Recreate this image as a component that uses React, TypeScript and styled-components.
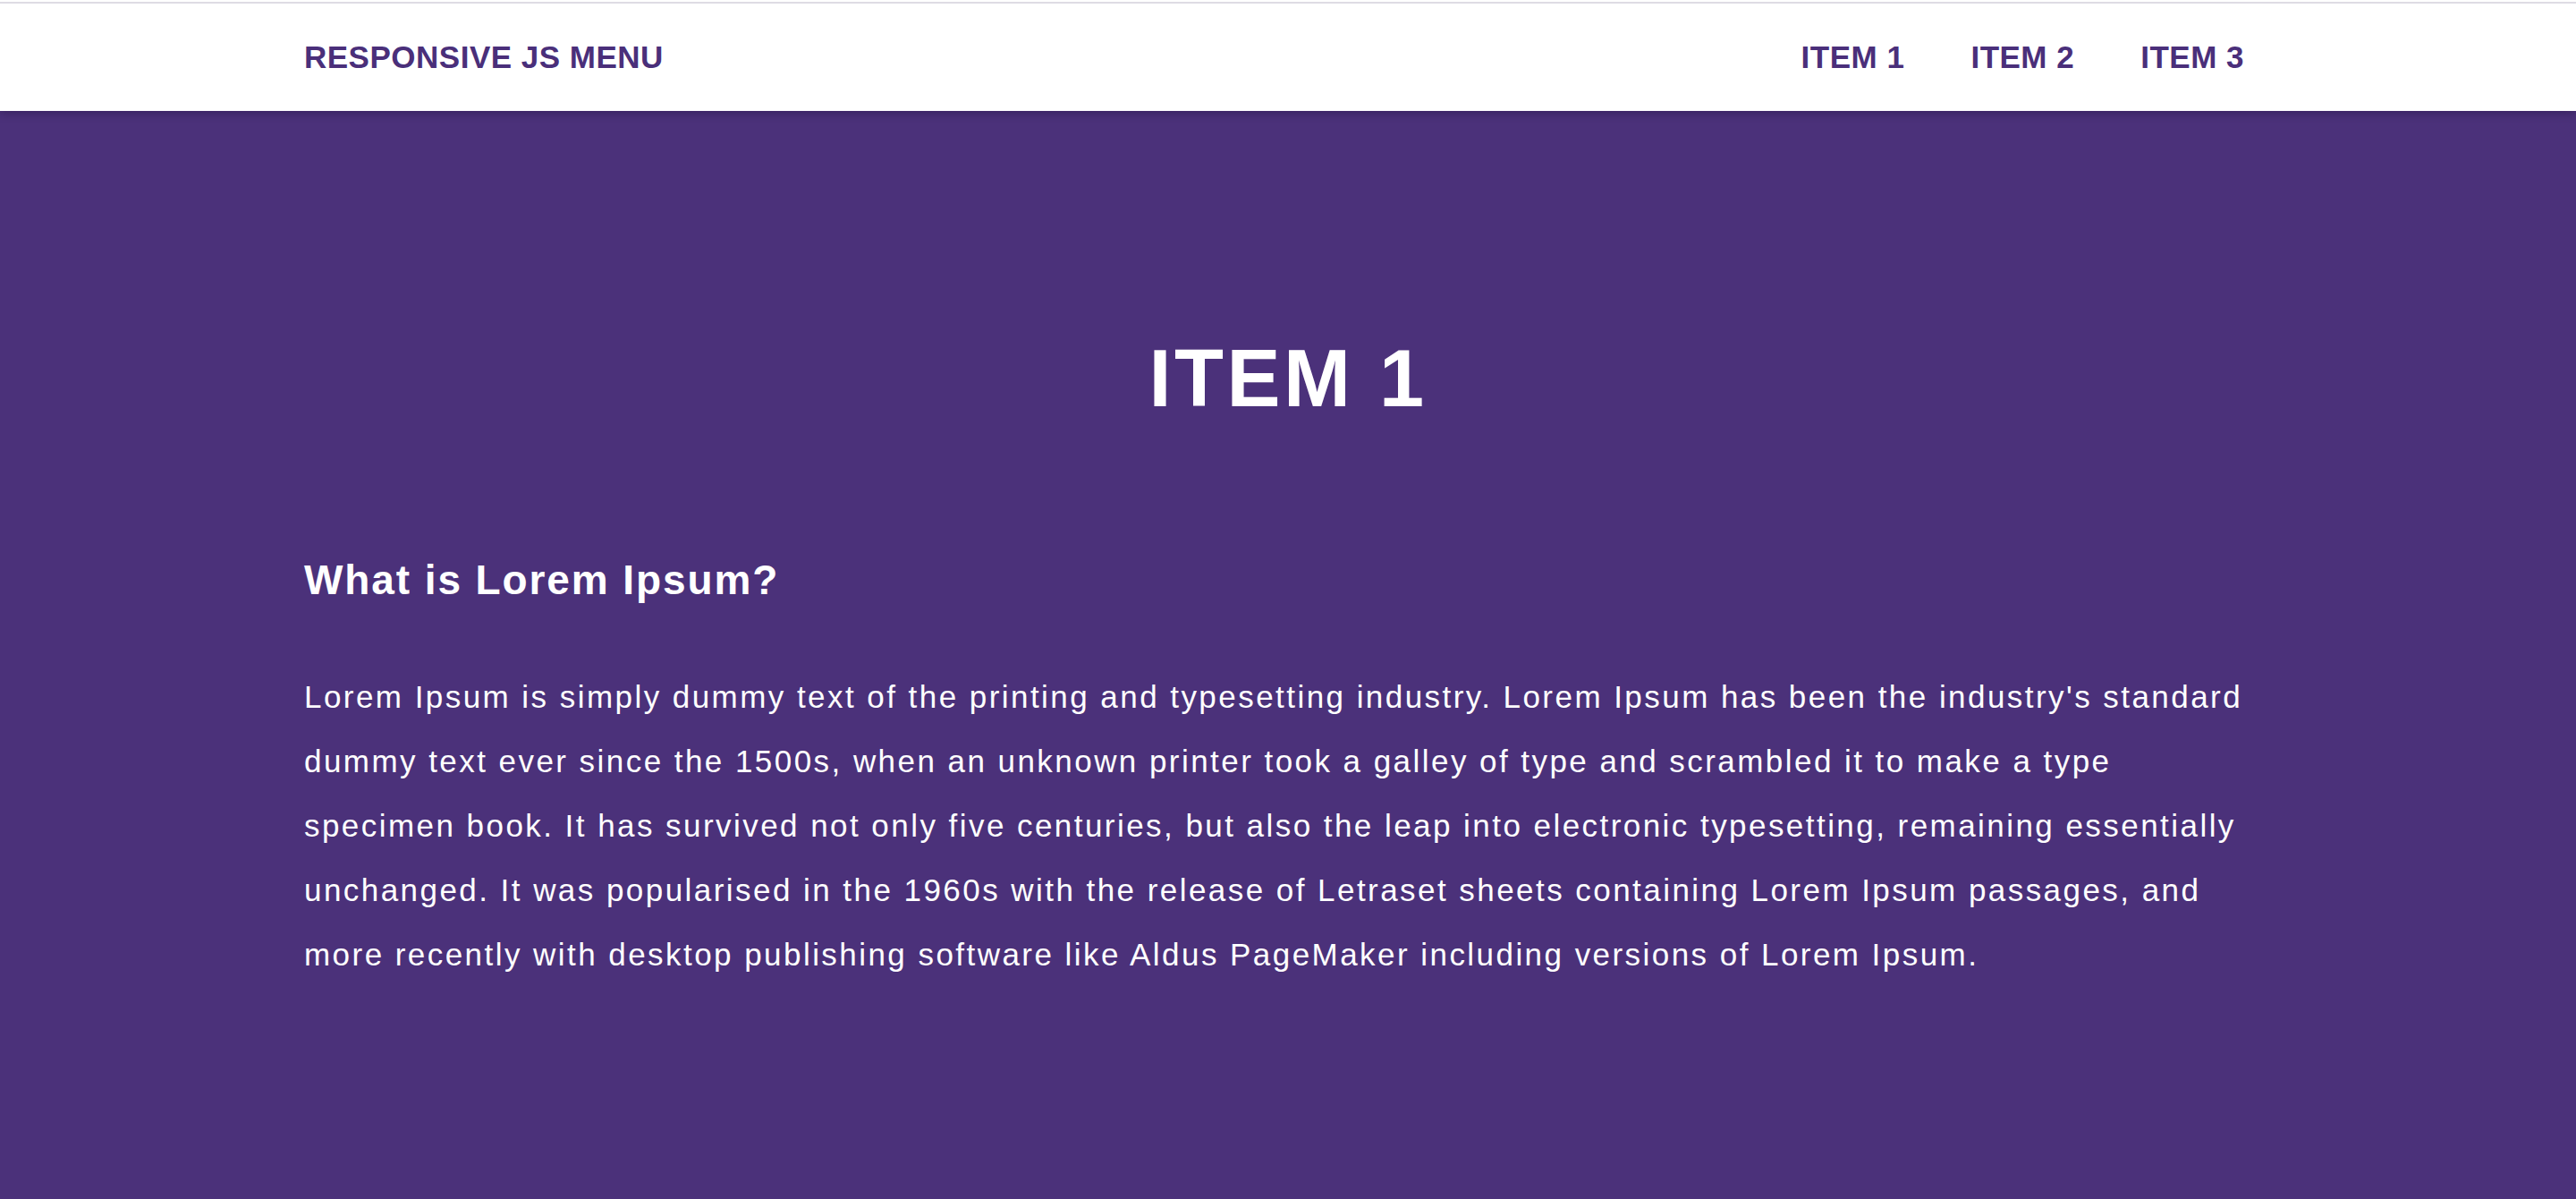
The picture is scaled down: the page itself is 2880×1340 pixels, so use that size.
import React from "react";
import styled, { createGlobalStyle } from "styled-components";

const GlobalStyle = createGlobalStyle`
  html, body {
    margin: 0;
    padding: 0;
    background: #4b317a;
  }
  body {
    font-family: "Liberation Sans", Arial, sans-serif;
    min-height: 1340px;
  }
  * { box-sizing: border-box; }
`;

const Page = styled.div`
  min-height: 1340px;
  background: #4b317a;
  display: flex;
  flex-direction: column;
`;

const Header = styled.header`
  background: #ffffff;
  height: 124px;
  padding-top: 2px;
  display: flex;
  flex-direction: column;
  box-shadow: 0 2px 10px rgba(20, 8, 40, 0.35);
  position: relative;
  z-index: 1;
`;

const TopLine = styled.div`
  height: 2px;
  background: #dedce4;
`;

const HeaderInner = styled.div`
  flex: 1;
  width: 2200px;
  margin: 0 auto;
  display: flex;
  align-items: center;
  justify-content: space-between;
`;

const Logo = styled.a`
  font-family: "Liberation Sans", Arial, sans-serif;
  font-weight: 700;
  font-size: 35px;
  color: #4a2f7a;
  text-decoration: none;
  letter-spacing: 0.5px;
`;

const Nav = styled.nav`
  display: flex;
  align-items: center;
  margin-right: -6px;
`;

const NavLink = styled.a`
  font-family: "Liberation Sans", Arial, sans-serif;
  font-weight: 700;
  font-size: 35px;
  color: #4a2f7a;
  text-decoration: none;
  letter-spacing: 0.5px;
  padding: 0 37px;
`;

const Main = styled.main`
  width: 2200px;
  margin: 0 auto;
  padding-top: 254px;
  color: #ffffff;
  display: flex;
  flex-direction: column;
`;

const Title = styled.h1`
  margin: 0;
  font-family: "Liberation Sans", Arial, sans-serif;
  font-weight: 700;
  font-size: 90px;
  line-height: 1;
  letter-spacing: 3.5px;
  text-align: center;
`;

const Heading = styled.h2`
  margin: 157px 0 0;
  font-family: "Liberation Sans", Arial, sans-serif;
  font-weight: 700;
  font-size: 46px;
  line-height: 1;
  letter-spacing: 1.9px;
`;

const Paragraph = styled.p`
  margin: 72px 0 0;
  font-family: "Liberation Sans", Arial, sans-serif;
  font-weight: 400;
  font-size: 35px;
  line-height: 72px;
  letter-spacing: 2.45px;
  max-width: 2190px;
`;

export default function App() {
  return (
    <>
      <GlobalStyle />
      <Page>
        <Header>
          <TopLine />
          <HeaderInner>
            <Logo href="#">RESPONSIVE JS MENU</Logo>
            <Nav>
              <NavLink href="#">ITEM 1</NavLink>
              <NavLink href="#">ITEM 2</NavLink>
              <NavLink href="#">ITEM 3</NavLink>
            </Nav>
          </HeaderInner>
        </Header>
        <Main>
          <Title>ITEM 1</Title>
          <Heading>What is Lorem Ipsum?</Heading>
          <Paragraph>
            Lorem Ipsum is simply dummy text of the printing and typesetting
            industry. Lorem Ipsum has been the industry's standard dummy text
            ever since the 1500s, when an unknown printer took a galley of type
            and scrambled it to make a type specimen book. It has survived not
            only five centuries, but also the leap into electronic typesetting,
            remaining essentially unchanged. It was popularised in the 1960s
            with the release of Letraset sheets containing Lorem Ipsum passages,
            and more recently with desktop publishing software like Aldus
            PageMaker including versions of Lorem Ipsum.
          </Paragraph>
        </Main>
      </Page>
    </>
  );
}
